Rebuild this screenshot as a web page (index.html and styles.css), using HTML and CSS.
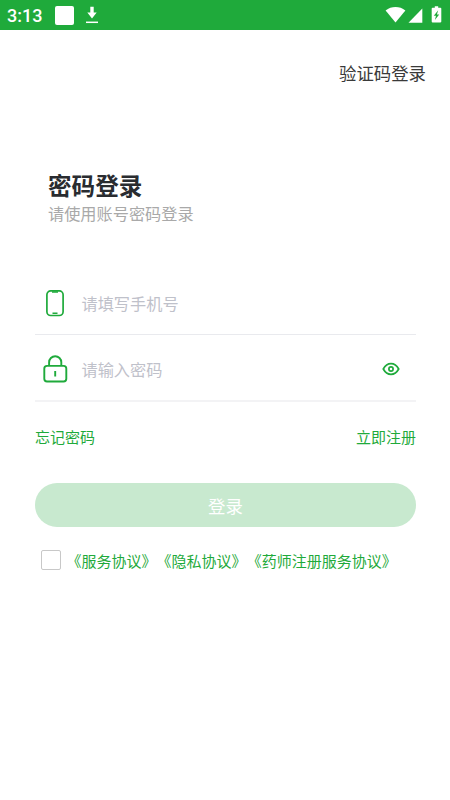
FILE: index.html
```html
<!DOCTYPE html>
<html lang="zh-CN">
<head>
<meta charset="utf-8">
<title>密码登录</title>
<link rel="stylesheet" href="styles.css">
</head>
<body>
<header class="status">
  <span class="time">3:13</span>
  <span class="app-badge"></span>
  <svg class="download" width="14" height="18" viewBox="0 0 14 18"><path d="M5.3 .8h3.400v5.800h3L7 12.400 2.300 6.600h3z" fill="#fff"/><path d="M1 16.300h12" stroke="#fff" stroke-width="1.500"/></svg>
  <svg class="signals" width="60" height="20" viewBox="0 0 60 20"><path d="M.6 5.400C6.300 .9 14.700 .9 20.400 5.400L10.500 17.500z" fill="#fff"/><path d="M37.300 3.600V17.700H23.500z" fill="#fff"/><path d="M49.800 1.200h3.400v1.500h2.200c.5 0 .9.4.9.9v13c0 .5-.4.9-.9.9h-7.800c-.5 0-.9-.4-.9-.9V3.600c0-.5.4-.9.9-.9h2.200z" fill="#fff"/><path d="M53.200 5.200l-4.400 5.500h2.200L49.900 15l4.300-5.500h-2.300z" fill="#1faa3b"/></svg>
</header>
<main>
  <a class="switch">验证码登录</a>
  <h1>密码登录</h1>
  <p class="subtitle">请使用账号密码登录</p>
  <div class="field phone">
    <svg width="40" height="32" viewBox="0 0 40 32" fill="none" stroke="#1faa3b"><rect x="11.900" y="3.900" width="16.200" height="24.600" rx="3.800" stroke-width="1.700"/><path d="M17 5h6M17.500 26.200h5" stroke-width="1.600"/></svg>
    <span>请填写手机号</span>
  </div>
  <div class="field password">
    <svg width="40" height="32" viewBox="0 0 40 32" fill="none" stroke="#1faa3b" stroke-width="1.900"><rect x="9.300" y="12.900" width="22" height="15.600" rx="2.700"/><path d="M14.100 12.900V9.300a6.100 6.100 0 0 1 12.200 0v3.600M20.200 17.900v5.600"/></svg>
    <span>请输入密码</span>
    <svg class="eye" width="18" height="14" viewBox="0 0 18 14" fill="none" stroke="#1faa3b" stroke-width="1.700"><path d="M1.300 7C5.100-.1 12.900-.1 16.700 7 12.900 14.100 5.100 14.100 1.300 7z"/><circle cx="9" cy="7" r="2.100"/></svg>
  </div>
  <nav class="links"><a>忘记密码</a><a>立即注册</a></nav>
  <button class="login">登录</button>
  <div class="agreement"><span class="check"></span><a>《服务协议》</a><a>《隐私协议》</a><a>《药师注册服务协议》</a></div>
</main>
</body>
</html>
```
FILE: styles.css
```css
* { box-sizing: border-box; }
body {
  margin: 0;
  height: 800px;
  overflow: hidden;
  background: #fff;
  font-family: Roboto, "Noto Sans CJK SC", sans-serif;
}
.status {
  display: flex;
  align-items: center;
  height: 30px;
  padding: 0 5px 0 7px;
  background: #1faa3b;
}
.time {
  width: 48px;
  color: #fff;
  font-size: 18px;
  font-weight: 500;
  line-height: 20px;
  padding-top: 2px;
}
.app-badge {
  width: 19px;
  height: 19px;
  border-radius: 2px;
  background: #fff;
}
.download { margin-left: 11px; }
.signals { margin: 0 0 0 auto; }
main {
  display: flex;
  flex-direction: column;
  padding: 30px 34px 0 35px;
  font-family: "Noto Sans CJK SC", sans-serif;
}
.switch {
  align-self: flex-end;
  margin-right: -10px;
  color: #3a3a3a;
  font-size: 17.4px;
  line-height: 26px;
}
h1 {
  margin: 82px 0 0 13px;
  color: #292c30;
  font-size: 23.6px;
  font-weight: 700;
  line-height: 34px;
}
.subtitle {
  margin: -1px 0 0 13px;
  color: #a9a9a9;
  font-size: 16.2px;
  line-height: 24px;
}
.field {
  display: flex;
  align-items: center;
  color: #bfc1ca;
  font-size: 16.2px;
}
.field span { margin-left: 6.5px; }
.phone {
  height: 66px;
  margin-top: 44px;
  padding-top: 2px;
  border-bottom: 1px solid #e9eaee;
}
.password {
  height: 67px;
  padding-top: 2px;
  border-bottom: 2px solid #f3f3f5;
}
.eye { margin: 0 16.5px 0 auto; }
.links {
  display: flex;
  justify-content: space-between;
  margin-top: 24px;
  color: #1faa3b;
  font-size: 15px;
  line-height: 22px;
}
.login {
  height: 44px;
  margin-top: 35px;
  padding: 0;
  border: 0;
  border-radius: 22px;
  background: #c8e9cf;
  color: #fff;
  font-family: inherit;
  font-size: 17.4px;
}
.agreement {
  display: flex;
  align-items: center;
  margin: 22px 0 0 6px;
  color: #1faa3b;
  font-size: 15px;
  line-height: 24px;
  white-space: nowrap;
}
.check {
  width: 20px;
  height: 20px;
  margin: 0 5.6px 2px 0;
  border: 1px solid #c8c8c8;
  border-radius: 2px;
}
```
